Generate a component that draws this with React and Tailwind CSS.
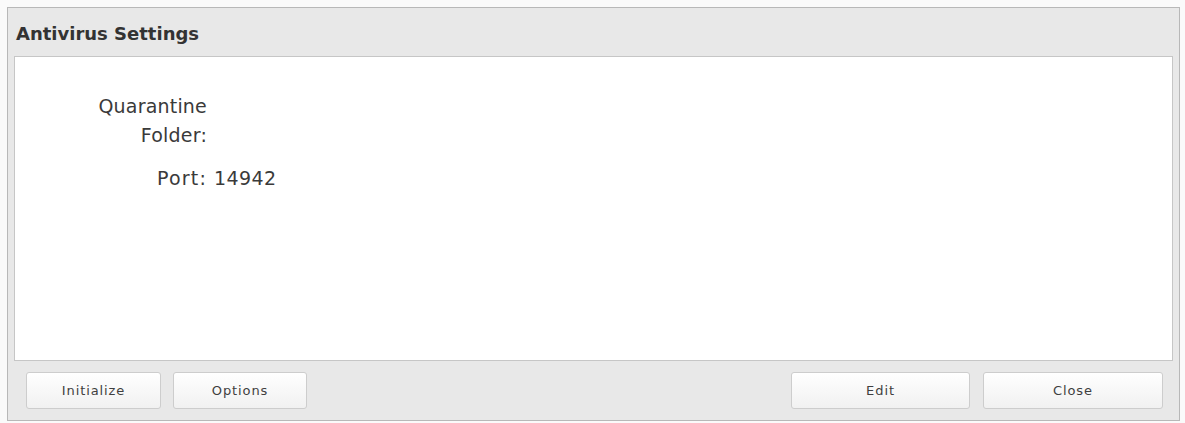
export default function App() {
  const font = { fontFamily: '"DejaVu Sans", Verdana, sans-serif' };
  const rows = [
    { label: 'Quarantine Folder:', value: '' },
    { label: 'Port:', value: '14942' },
  ];

  const Button = ({ children, className }) => (
    <button
      className={`h-[37px] rounded-[3px] border border-[#cdcdcd] bg-gradient-to-b from-white to-[#f1f1f1] text-[13px] tracking-[0.9px] text-[#3f3f3f] shadow-[inset_0_1px_0_#ffffff] ${className}`}
      style={font}
    >
      {children}
    </button>
  );

  return (
    <div className="w-[1185px] h-[423px] bg-[#fafafa] pt-[7px] pl-[7px]" style={font}>
      <div className="w-[1173px] h-[414px] border border-[#b8b8b8] bg-[#e8e8e8] flex flex-col">
        {/* Title bar */}
        <div className="h-[48px] pl-[8px] pt-[3px] flex items-center">
          <h1 className="text-[18px] font-bold text-[#333333]">Antivirus Settings</h1>
        </div>

        {/* Content panel */}
        <div className="mx-[6px] h-[305px] border border-[#c6c6c6] bg-white pt-[35px] pl-[74px]">
          <div className="flex flex-col gap-[14px] text-[19px] leading-[29px] text-[#3a3a3a]">
            {rows.map(row => (
              <div key={row.label} className="flex items-start">
                <span className="w-[118px] text-right tracking-[0.2px]">
                  {row.label === 'Port:' ? <span className="tracking-[1.2px]">{row.label}</span> : row.label}
                </span>
                <span className="pl-[7px] tracking-[0.4px]">{row.value}</span>
              </div>
            ))}
          </div>
        </div>

        {/* Button row */}
        <div className="flex items-center pt-[11px] pl-[18px] pr-[16px]">
          <Button className="w-[135px]">Initialize</Button>
          <Button className="w-[134px] ml-[12px]">Options</Button>
          <div className="flex-1" />
          <Button className="w-[179px]">Edit</Button>
          <Button className="w-[180px] ml-[13px]">Close</Button>
        </div>
      </div>
    </div>
  );
}
